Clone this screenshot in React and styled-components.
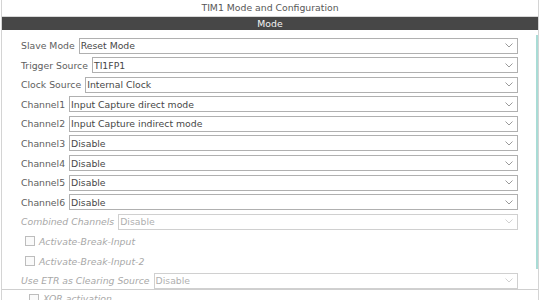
import React from "react";
import styled, { createGlobalStyle } from "styled-components";

const GlobalStyle = createGlobalStyle`
  html, body {
    margin: 0;
    padding: 0;
    background: #ffffff;
    overflow: hidden;
  }
  body {
    font-family: "DejaVu Sans", "Liberation Sans", sans-serif;
    font-size: 9.3px;
  }
`;

const Frame = styled.div`
  width: 536px;
  height: 300px;
  margin: 0 1px;
  border-left: 1px solid #d4d4d4;
  border-right: 1px solid #d4d4d4;
  display: flex;
  flex-direction: column;
  overflow: hidden;
`;

const Title = styled.div`
  height: 17px;
  line-height: 16px;
  text-align: center;
  color: #575757;
  border-bottom: 1px solid #d8d8d8;
`;

const Bar = styled.div`
  height: 13px;
  line-height: 13px;
  background: #474747;
  color: #f4f4f4;
  text-align: center;
  margin: 0 -2px;
`;

const Panel = styled.div`
  display: flex;
  height: 265px;
  border-bottom: 1px solid #cfcfcf;
`;

const Content = styled.div`
  flex: 1;
  display: flex;
  flex-direction: column;
  gap: 3.6px;
  padding: 7.5px 18px 0 19px;
`;

const ScrollTrack = styled.div`
  width: 2px;
  margin-top: 5px;
  height: 234px;
  background: #a9dcd6;
`;

const Row = styled.div`
  display: flex;
  align-items: center;
  gap: 4px;
  height: 16px;
  flex-shrink: 0;
`;

const Label = styled.span`
  color: ${(p) => (p.$disabled ? "#a8a8a8" : "#5e5e5e")};
  font-style: ${(p) => (p.$disabled ? "italic" : "normal")};
  white-space: nowrap;
`;

const Select = styled.div`
  flex: 1;
  height: 16px;
  box-sizing: border-box;
  border: 1px solid ${(p) => (p.$disabled ? "#d0d0d0" : "#b0b0b0")};
  background: #ffffff;
  display: flex;
  align-items: center;
  justify-content: space-between;
  padding: 0 4px 0 1px;
  color: ${(p) => (p.$disabled ? "#b0b0b0" : "#474747")};
  white-space: nowrap;
`;

const CheckRow = styled.div`
  display: flex;
  align-items: center;
  gap: 4px;
  height: 16px;
  flex-shrink: 0;
  padding-left: 4px;
`;

const Box = styled.span`
  width: 8px;
  height: 8px;
  border: 1px solid #bdbdbd;
  background: #fafafa;
  flex-shrink: 0;
`;

const Tail = styled.div`
  padding: 1px 0 0 23px;
`;

const Chevron = ({ disabled }) => (
  <svg width="8" height="5" viewBox="0 0 8 5">
    <path
      d="M0.5 0.5 L4 4 L7.5 0.5"
      fill="none"
      stroke={disabled ? "#d2d2d2" : "#9a9a9a"}
      strokeWidth="1"
    />
  </svg>
);

const Field = ({ label, value, disabled }) => (
  <Row>
    <Label $disabled={disabled}>{label}</Label>
    <Select $disabled={disabled}>
      <span>{value}</span>
      <Chevron disabled={disabled} />
    </Select>
  </Row>
);

const Check = ({ label }) => (
  <CheckRow>
    <Box />
    <Label $disabled>{label}</Label>
  </CheckRow>
);

const fields = [
  ["Slave Mode", "Reset Mode"],
  ["Trigger Source", "TI1FP1"],
  ["Clock Source", "Internal Clock"],
  ["Channel1", "Input Capture direct mode"],
  ["Channel2", "Input Capture indirect mode"],
  ["Channel3", "Disable"],
  ["Channel4", "Disable"],
  ["Channel5", "Disable"],
  ["Channel6", "Disable"],
];

export default function App() {
  return (
    <>
      <GlobalStyle />
      <Frame>
        <Title>TIM1 Mode and Configuration</Title>
        <Bar>Mode</Bar>
        <Panel>
          <Content>
            {fields.map(([l, v]) => (
              <Field key={l} label={l} value={v} />
            ))}
            <Field label="Combined Channels" value="Disable" disabled />
            <Check label="Activate-Break-Input" />
            <Check label="Activate-Break-Input-2" />
            <Field label="Use ETR as Clearing Source" value="Disable" disabled />
          </Content>
          <ScrollTrack />
        </Panel>
        <Tail>
          <CheckRow>
            <Box />
            <Label $disabled>XOR activation</Label>
          </CheckRow>
        </Tail>
      </Frame>
    </>
  );
}
